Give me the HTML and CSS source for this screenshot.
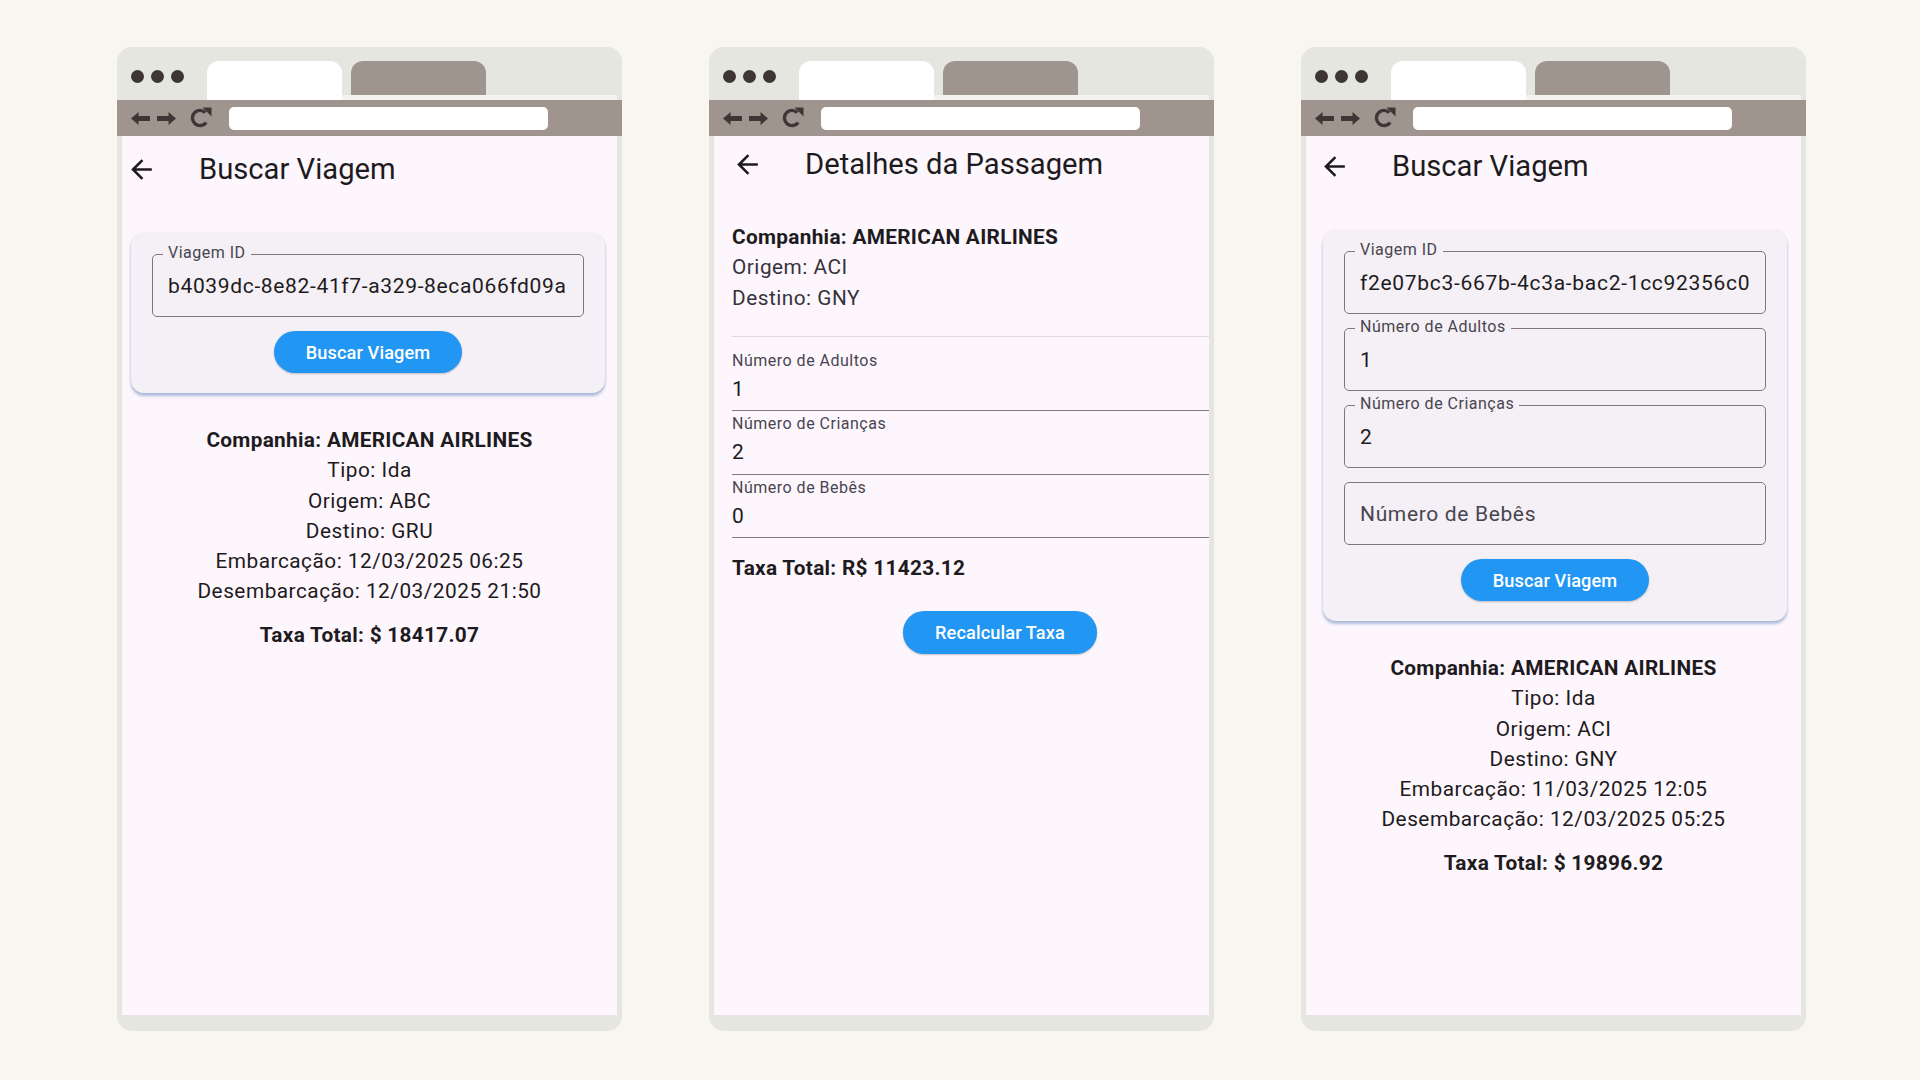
FILE: index.html
```html
<!DOCTYPE html>
<html lang="pt-BR">

<head>
    <meta charset="UTF-8">
    <title>Viagens</title>
    <link rel="stylesheet" href="styles.css">
</head>

<body>
    <main class="stage">

        <!-- busca: resultado por id -->
        <section class="window">
            <div class="tabbar">
                <div class="dots"><span></span><span></span><span></span></div>
                <div class="tab tab-active"></div>
                <div class="tab tab-idle"></div>
            </div>
            <div class="toolbar">
                <svg class="nav-arrow" viewBox="0 0 19 13"><path d="M0 6.5L7.5 0v4H19v5H7.5v4z"/></svg>
                <svg class="nav-arrow" viewBox="0 0 19 13"><path d="M19 6.5L11.5 0v4H0v5h11.5v4z"/></svg>
                <svg class="reload" viewBox="0 0 23 21"><path class="reload-arc" d="M16.4 5.6A7.6 7.6 0 1 0 17.2 15.4"/><path d="M13.5 0.5h9v9z"/></svg>
                <div class="urlbar"></div>
            </div>
            <div class="screen screen-one">
                <header class="appbar">
                    <svg class="back" viewBox="0 0 24 24"><path d="M20 11H7.83l5.59-5.59L12 4l-8 8 8 8 1.41-1.41L7.83 13H20v-2z"/></svg>
                    <h1>Buscar Viagem</h1>
                </header>
                <div class="card">
                    <div class="outlined">
                        <span class="float-label">Viagem ID</span>
                        <span class="value">b4039dc-8e82-41f7-a329-8eca066fd09a</span>
                    </div>
                    <button class="btn">Buscar Viagem</button>
                </div>
                <div class="result">
                    <p class="strong">Companhia: AMERICAN AIRLINES</p>
                    <p>Tipo: Ida</p>
                    <p>Origem: ABC</p>
                    <p>Destino: GRU</p>
                    <p>Embarcação: 12/03/2025 06:25</p>
                    <p>Desembarcação: 12/03/2025 21:50</p>
                    <p class="strong total">Taxa Total: $ 18417.07</p>
                </div>
            </div>
        </section>

        <!-- detalhes -->
        <section class="window">
            <div class="tabbar">
                <div class="dots"><span></span><span></span><span></span></div>
                <div class="tab tab-active"></div>
                <div class="tab tab-idle"></div>
            </div>
            <div class="toolbar">
                <svg class="nav-arrow" viewBox="0 0 19 13"><path d="M0 6.5L7.5 0v4H19v5H7.5v4z"/></svg>
                <svg class="nav-arrow" viewBox="0 0 19 13"><path d="M19 6.5L11.5 0v4H0v5h11.5v4z"/></svg>
                <svg class="reload" viewBox="0 0 23 21"><path class="reload-arc" d="M16.4 5.6A7.6 7.6 0 1 0 17.2 15.4"/><path d="M13.5 0.5h9v9z"/></svg>
                <div class="urlbar"></div>
            </div>
            <div class="screen">
                <div class="pane">
                    <header class="appbar appbar-two">
                        <svg class="back" viewBox="0 0 24 24"><path d="M20 11H7.83l5.59-5.59L12 4l-8 8 8 8 1.41-1.41L7.83 13H20v-2z"/></svg>
                        <h1>Detalhes da Passagem</h1>
                    </header>
                    <div class="summary">
                        <p class="strong">Companhia: AMERICAN AIRLINES</p>
                        <p class="muted">Origem: ACI</p>
                        <p class="muted">Destino: GNY</p>
                    </div>
                    <hr class="divider">
                    <div class="underlined">
                        <span class="small-label">Número de Adultos</span>
                        <span class="value">1</span>
                    </div>
                    <div class="underlined">
                        <span class="small-label">Número de Crianças</span>
                        <span class="value">2</span>
                    </div>
                    <div class="underlined">
                        <span class="small-label">Número de Bebês</span>
                        <span class="value">0</span>
                    </div>
                    <p class="strong fee">Taxa Total: R$ 11423.12</p>
                    <button class="btn btn-recalc">Recalcular Taxa</button>
                </div>
            </div>
        </section>

        <!-- busca: com passageiros -->
        <section class="window">
            <div class="tabbar">
                <div class="dots"><span></span><span></span><span></span></div>
                <div class="tab tab-active"></div>
                <div class="tab tab-idle"></div>
            </div>
            <div class="toolbar">
                <svg class="nav-arrow" viewBox="0 0 19 13"><path d="M0 6.5L7.5 0v4H19v5H7.5v4z"/></svg>
                <svg class="nav-arrow" viewBox="0 0 19 13"><path d="M19 6.5L11.5 0v4H0v5h11.5v4z"/></svg>
                <svg class="reload" viewBox="0 0 23 21"><path class="reload-arc" d="M16.4 5.6A7.6 7.6 0 1 0 17.2 15.4"/><path d="M13.5 0.5h9v9z"/></svg>
                <div class="urlbar"></div>
            </div>
            <div class="screen screen-three">
                <header class="appbar">
                    <svg class="back" viewBox="0 0 24 24"><path d="M20 11H7.83l5.59-5.59L12 4l-8 8 8 8 1.41-1.41L7.83 13H20v-2z"/></svg>
                    <h1>Buscar Viagem</h1>
                </header>
                <div class="card">
                    <div class="outlined">
                        <span class="float-label">Viagem ID</span>
                        <span class="value value-long">f2e07bc3-667b-4c3a-bac2-1cc92356c0</span>
                    </div>
                    <div class="outlined">
                        <span class="float-label">Número de Adultos</span>
                        <span class="value">1</span>
                    </div>
                    <div class="outlined">
                        <span class="float-label">Número de Crianças</span>
                        <span class="value">2</span>
                    </div>
                    <div class="outlined">
                        <span class="value placeholder">Número de Bebês</span>
                    </div>
                    <button class="btn">Buscar Viagem</button>
                </div>
                <div class="result">
                    <p class="strong">Companhia: AMERICAN AIRLINES</p>
                    <p>Tipo: Ida</p>
                    <p>Origem: ACI</p>
                    <p>Destino: GNY</p>
                    <p>Embarcação: 11/03/2025 12:05</p>
                    <p>Desembarcação: 12/03/2025 05:25</p>
                    <p class="strong total">Taxa Total: $ 19896.92</p>
                </div>
            </div>
        </section>

    </main>
</body>

</html>
```

FILE: styles.css
```css
* {
    box-sizing: border-box;
}

body {
    margin: 0;
    background-color: #f9f5f1;
    font-family: Roboto, "Liberation Sans", sans-serif;
    color: #1d1b20;
}

p {
    margin: 0;
}

.stage {
    display: flex;
    gap: 87px;
    height: 1080px;
    padding: 47px 0 0 117px;
}

/* browser frame */

.window {
    width: 505px;
    height: 984px;
    display: flex;
    flex-direction: column;
    padding-bottom: 16px;
    background-color: #e6e6e0;
    border-radius: 15px;
    overflow: hidden;
}

.tabbar {
    height: 53px;
    display: flex;
    align-items: flex-start;
    padding: 14px 0 0 14px;
    background: linear-gradient(#f3f3ef, #f3f3ef) right 5px bottom / 275px 5px no-repeat, #e6e6e0;
}

.dots {
    display: flex;
    gap: 7px;
    margin-top: 9px;
}

.dots span {
    width: 13px;
    height: 13px;
    border-radius: 50%;
    background-color: #3e3535;
}

.tab {
    width: 135px;
    border-radius: 12px 12px 0 0;
}

.tab-active {
    height: 39px;
    margin-left: 23px;
    background-color: #ffffff;
}

.tab-idle {
    height: 34px;
    margin-left: 9px;
    background-color: #a0958e;
}

.toolbar {
    height: 36px;
    display: flex;
    align-items: center;
    padding-left: 14px;
    background-color: #a0958e;
}

.nav-arrow {
    width: 19px;
    height: 13px;
    margin-right: 7px;
    fill: #3e3535;
}

.reload {
    width: 23px;
    height: 21px;
    margin: -1px 17px 0 6px;
    fill: #3e3535;
}

.reload-arc {
    fill: none;
    stroke: #3e3535;
    stroke-width: 3.4;
}

.urlbar {
    width: 319px;
    height: 23px;
    border-radius: 5px;
    background-color: #ffffff;
}

.screen {
    flex: 1;
    margin: 0 5px;
    background-color: #fdf6fd;
    overflow: hidden;
}

/* app */

.appbar {
    height: 56px;
    display: flex;
    align-items: center;
}

.screen-one .appbar {
    margin-top: 5px;
    padding-left: 4px;
}

.screen-three .appbar {
    margin-top: 2px;
    padding-left: 13px;
}

.appbar-two {
    padding-left: 0;
}

.back {
    width: 31px;
    height: 31px;
    flex-shrink: 0;
    fill: #1d1b20;
}

.appbar h1 {
    margin: 0 0 0 42px;
    font-size: 29.2px;
    font-weight: 400;
    line-height: 34px;
    color: #1d1b20;
    white-space: nowrap;
}

.card {
    display: flex;
    flex-direction: column;
    gap: 14px;
    margin-top: 36px;
    padding: 21px 21px 20px;
    background-color: #f4f0f6;
    border-radius: 13px;
    box-shadow: 0 3px 3px rgba(80, 120, 180, 0.45), 0 0 3px rgba(0, 0, 0, 0.08);
}

.screen-one .card {
    margin-left: 9px;
    margin-right: 12px;
}

.screen-three .card {
    margin-left: 17px;
    margin-right: 14px;
}

.outlined {
    position: relative;
    height: 63px;
    display: flex;
    align-items: center;
    padding: 0 15px;
    border: 1.3px solid #7d787f;
    border-radius: 5px;
}

.float-label {
    position: absolute;
    top: -11px;
    left: 10px;
    padding: 0 5px;
    font-size: 16px;
    line-height: 18px;
    letter-spacing: 0.5px;
    color: #49454f;
    background-color: #f4f0f6;
}

.value {
    flex: 1;
    white-space: nowrap;
    font-size: 21px;
    line-height: 30px;
    letter-spacing: 0.65px;
    color: #1d1b20;
}

.value-long {
    letter-spacing: 0.7px;
}

.placeholder {
    color: #49454f;
}

.btn {
    display: block;
    align-self: center;
    height: 42px;
    padding: 0 32px;
    border: none;
    border-radius: 21px;
    background-color: #2196f3;
    color: #ffffff;
    font-family: inherit;
    font-size: 18.2px;
    font-weight: 500;
    letter-spacing: 0.1px;
    box-shadow: 0 1px 2px rgba(0, 0, 0, 0.22);
}

.result {
    margin-top: 32px;
    text-align: center;
}

.result p,
.summary p,
.fee {
    font-size: 20.8px;
    line-height: 30.3px;
    letter-spacing: 0.5px;
}

.result .strong,
.summary .strong,
.fee {
    letter-spacing: 0.3px;
}

.strong {
    font-weight: 700;
}

.total {
    margin-top: 13px;
}

/* detalhes */

.pane {
    width: 572px;
    padding: 0 18px;
}

.summary {
    margin-top: 30px;
}

.muted {
    color: #36333a;
}

.divider {
    margin: 23px 0 11px;
    border: none;
    border-top: 1.5px solid #dfdadf;
}

.underlined {
    display: flex;
    flex-direction: column;
    padding: 4px 0 6.5px;
    border-bottom: 1.5px solid #7f7b84;
}

.small-label {
    font-size: 16px;
    line-height: 18px;
    letter-spacing: 0.5px;
    color: #49454f;
}

.underlined .value {
    margin-top: 4px;
}

.fee {
    margin-top: 15px;
}

.btn-recalc {
    margin: 27px auto 0;
    height: 43px;
    padding: 0 32px;
}
```
